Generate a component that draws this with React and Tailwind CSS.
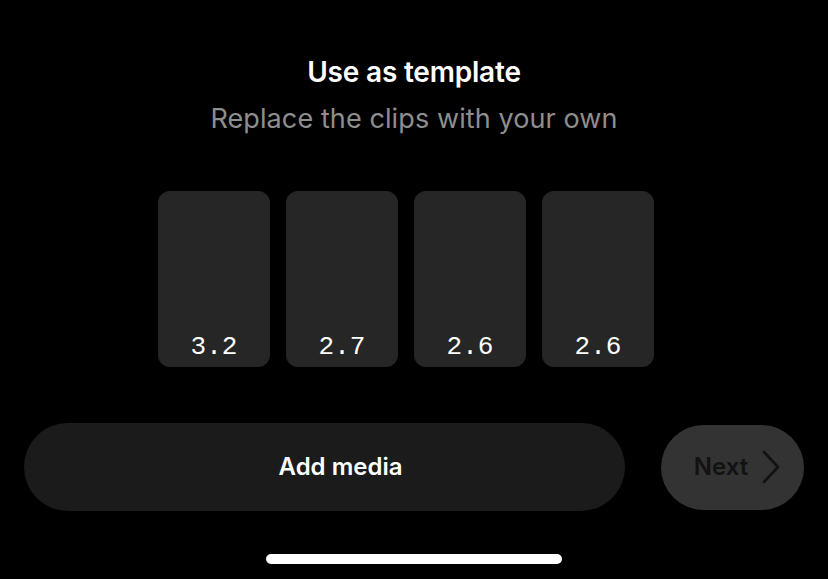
const clips = ['3.2', '2.7', '2.6', '2.6'];

const App = () => {
    return (
        <main className="w-[828px] h-[579px] bg-black flex flex-col items-center overflow-hidden" style={{ fontFamily: 'Inter, "Noto Sans", sans-serif' }}>
            <h1 className="mt-[55px] text-[28px] leading-[34px] font-semibold text-white tracking-[-0.2px]">Use as template</h1>
            <p className="mt-[13px] text-[27px] leading-[34px] text-[#8e8e8e] tracking-[0.1px]">Replace the clips with your own</p>

            <div className="mt-[55px] mr-4 flex gap-4">
                {clips.map((len, idx) => (
                    <div key={idx} className="w-[112px] h-[176px] rounded-[12px] bg-[#262626] flex items-end justify-center pb-[3px]">
                        <span className="text-[26px] leading-[34px] text-white" style={{ fontFamily: '"Liberation Mono", monospace' }}>{len}</span>
                    </div>
                ))}
            </div>

            <div className="mt-[56px] w-full px-6 flex items-center gap-9">
                <button className="flex-1 h-[88px] rounded-full bg-[#1b1b1b] pl-[32px] text-white text-[24px] font-semibold">
                    Add media
                </button>
                <button className="w-[143px] h-[85px] rounded-full bg-[#333333] flex items-center justify-center gap-[13px] pl-[10px] text-[#121212] text-[24px] font-semibold">
                    Next
                    <svg width="20" height="34" viewBox="0 0 20 34" fill="none">
                        <path d="M3 2 L17 17 L3 32" stroke="#121212" strokeWidth="2.6" strokeLinecap="round" strokeLinejoin="round" />
                    </svg>
                </button>
            </div>

            <div className="mt-[43px] w-[296px] h-[10px] rounded-full bg-white"></div>
        </main>
    );
};

export default App;
